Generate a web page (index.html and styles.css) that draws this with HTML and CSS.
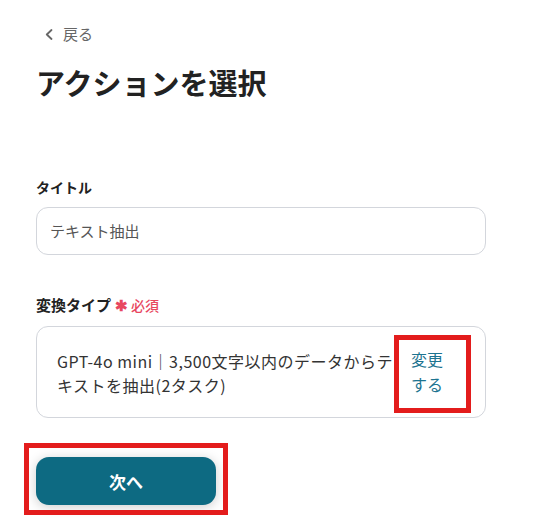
FILE: index.html
```html
<!DOCTYPE html>
<html lang="ja">
<head>
<meta charset="utf-8">
<link rel="stylesheet" href="styles.css">
</head>
<body>
<div class="page">
  <a class="back" href="#">
    <svg class="chev" width="8" height="11" viewBox="0 0 8 11"><path d="M6.5 1 L1.8 5.5 L6.5 10" fill="none" stroke="#666" stroke-width="1.8" stroke-linecap="round" stroke-linejoin="round"/></svg>
    <span>戻る</span>
  </a>
  <h1 class="title">アクションを選択</h1>

  <div class="field field-title">
    <div class="label">タイトル</div>
    <div class="input">テキスト抽出</div>
  </div>

  <div class="field field-type">
    <div class="label label-lg">変換タイプ<span class="req"><span class="ast">✱</span>必須</span></div>
    <div class="select">
      <div class="select-text">GPT-4o mini｜3,500文字以内のデータからテキストを抽出(2タスク)</div>
      <a class="change" href="#">変更する</a>
    </div>
  </div>

  <div class="actions">
    <button class="next">次へ</button>
  </div>

  <div class="mark mark-change"></div>
  <div class="mark mark-next"></div>
</div>
</body>
</html>
```

FILE: styles.css
```css
html, body {
  margin: 0;
  padding: 0;
  background: #ffffff;
}
body {
  font-family: "Noto Sans CJK JP", "Noto Sans", sans-serif;
  color: #222;
}
.page {
  position: relative;
  width: 450px;
  padding: 24px 0 0 36px;
  height: 499px;
}
.back {
  display: flex;
  align-items: center;
  gap: 10px;
  height: 20px;
  padding-left: 9px;
  color: #666;
  text-decoration: none;
  font-size: 15px;
  line-height: 20px;
}
.chev { display: block; }
.title {
  margin: 18px 0 0 0;
  font-size: 29px;
  line-height: 40px;
  font-weight: 700;
  color: #222;
}
.field-title { margin-top: 75px; }
.field-type { margin-top: 40px; }
.label {
  font-size: 14px;
  line-height: 20px;
  font-weight: 700;
  color: #222;
  display: flex;
  align-items: center;
}
.label-lg {
  font-size: 15px;
}
.req {
  margin-left: 4px;
  color: #e8475f;
  font-weight: 500;
  font-size: 14px;
  display: flex;
  align-items: center;
}
.ast {
  font-size: 15px;
  font-weight: 700;
  margin-right: 3px;
}
.input {
  margin-top: 10px;
  box-sizing: border-box;
  height: 48px;
  border: 1px solid #d3d6dc;
  border-radius: 12px;
  padding: 0 13px;
  font-size: 15px;
  line-height: 46px;
  color: #555;
}
.select {
  margin-top: 11px;
  box-sizing: border-box;
  height: 92px;
  border: 1px solid #d3d6dc;
  border-radius: 12px;
  padding: 22px 42px 0 20px;
  display: flex;
  gap: 15px;
  font-size: 16px;
  line-height: 24px;
}
.select-text {
  flex: 1;
  color: #333;
  letter-spacing: 0.5px;
}
.change {
  width: 32px;
  color: #1d7490;
  text-decoration: none;
  line-height: 25px;
  margin-top: -2px;
}
.actions {
  margin-top: 39px;
}
.next {
  display: block;
  width: 180px;
  height: 48px;
  border: none;
  border-radius: 13px;
  background: #0d6a82;
  color: #fff;
  font-family: inherit;
  font-size: 17px;
  font-weight: 700;
  box-shadow: 0 2px 12px rgba(0,0,0,0.2);
}
.mark {
  position: absolute;
  box-sizing: border-box;
  border: 5px solid #e31c1c;
}
.mark-change {
  left: 394px;
  top: 335px;
  width: 77px;
  height: 78px;
}
.mark-next {
  left: 24px;
  top: 443px;
  width: 204px;
  height: 72px;
}
```
